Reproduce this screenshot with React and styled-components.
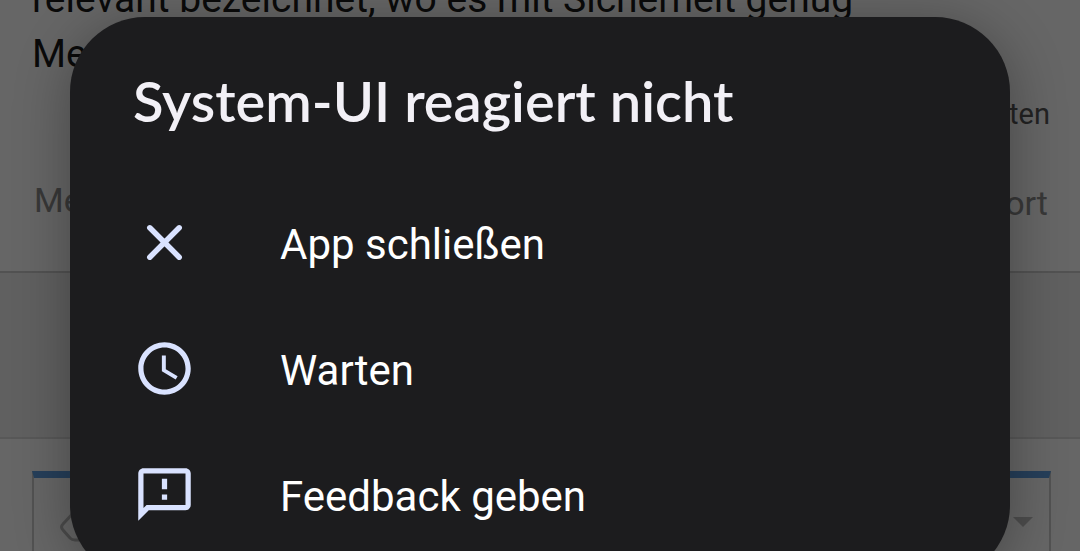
import React from "react";

import styled, { createGlobalStyle } from "styled-components";

const actions = [
  { id: "close", label: "App schließen", Icon: CloseIcon },
  { id: "wait", label: "Warten", Icon: ClockIcon },
  { id: "feedback", label: "Feedback geben", Icon: FeedbackIcon },
];

function CloseIcon() {
  return (
    <ActionIcon viewBox="0 0 24 24" aria-hidden="true">
      <path
        d="M6.4 6.4 17.6 17.6M17.6 6.4 6.4 17.6"
        fill="none"
        stroke="currentColor"
        strokeWidth="2.1"
        strokeLinecap="round"
      />
    </ActionIcon>
  );
}

function ClockIcon() {
  return (
    <ActionIcon viewBox="0 0 24 24" aria-hidden="true">
      <path d="M11.99 2C6.47 2 2 6.48 2 12s4.47 10 9.99 10C17.52 22 22 17.52 22 12S17.52 2 11.99 2zM12 20c-4.42 0-8-3.58-8-8s3.58-8 8-8 8 3.58 8 8-3.58 8-8 8zm.5-13H11v6l5.25 3.15.75-1.23-4.5-2.67z" />
    </ActionIcon>
  );
}

function FeedbackIcon() {
  return (
    <ActionIcon viewBox="0 0 24 24" aria-hidden="true">
      <path d="M20 2H4c-1.1 0-1.99.9-1.99 2L2 22l4-4h14c1.1 0 2-.9 2-2V4c0-1.1-.9-2-2-2zm0 14H5.17l-.59.59-.58.58V4h16v12zm-9-4h2v2h-2zm0-6h2v4h-2z" />
    </ActionIcon>
  );
}

const App = () => {
  return (
    <Screen>
      <GlobalStyle />

      <Page>
        <Post>
          <PostText>
            relevant bezeichnet, wo es mit Sicherheit genug
            <br />
            Medien
          </PostText>
          <PostMeta>Antworten</PostMeta>
          <PostActions>
            <PostStatus>Melden</PostStatus>
            <PostLink href="#antwort">Antwort</PostLink>
          </PostActions>
        </Post>

        <Divider />

        <Panel>
          <PanelToggle type="button" aria-label="Themen">
            <TagIcon viewBox="0 0 48 48" aria-hidden="true">
              <path d="M22 4H40a4 4 0 0 1 4 4V34a4 4 0 0 1-4 4H15q-3 0-5-2L3 28q-3-3 0-6L17 7q2-3 5-3z" />
            </TagIcon>
            <Caret viewBox="0 0 20 10" aria-hidden="true">
              <path d="M0 0H20L10 10z" />
            </Caret>
          </PanelToggle>
        </Panel>
      </Page>

      <Scrim>
        <Dialog role="dialog" aria-labelledby="dialog-title">
          <DialogTitle id="dialog-title">System-UI reagiert nicht</DialogTitle>
          {actions.map(({ id, label, Icon }) => (
            <ActionButton key={id} type="button">
              <Icon />
              <ActionLabel>{label}</ActionLabel>
            </ActionButton>
          ))}
        </Dialog>
      </Scrim>
    </Screen>
  );
};

export default App;

const GlobalStyle = createGlobalStyle`
  * {
    box-sizing: border-box;
  }

  body {
    margin: 0;
    font-family: Roboto, "Liberation Sans", sans-serif;
  }
`;

const Screen = styled.div`
  position: relative;
  height: 100vh;
  overflow: hidden;
  background-color: #ffffff;
`;

const Page = styled.main`
  display: flex;
  flex-direction: column;
`;

const Post = styled.article`
  display: flex;
  flex-direction: column;
  padding: 0 30px 43px 32px;
  margin-top: -28px;
`;

const PostText = styled.p`
  margin: 0;
  color: #1a1a1a;
  font-size: 39px;
  line-height: 55px;
`;

const PostMeta = styled.span`
  align-self: flex-end;
  margin-top: 12px;
  color: #555555;
  font-size: 29px;
  line-height: 40px;
`;

const PostActions = styled.div`
  display: flex;
  align-items: flex-start;
  justify-content: space-between;
  margin-top: 44px;
  padding: 0 2px;
  color: #8c8c8c;
  font-size: 34px;
`;

const PostStatus = styled.span`
  line-height: 44px;
`;

const PostLink = styled.a`
  color: inherit;
  line-height: 50px;
  text-decoration: none;
`;

const Divider = styled.div`
  height: 168px;
  background-color: #f0f0f0;
  border-top: 2px solid #cccccc;
  border-bottom: 2px solid #dddddd;
`;

const Panel = styled.section`
  margin: 32px 29px 0 32px;
  border: 2px solid #cccccc;
  border-top: 7px solid #5f9fe0;
`;

const PanelToggle = styled.button`
  display: flex;
  align-items: center;
  justify-content: space-between;
  width: 100%;
  padding: 24px 16px 24px 26px;
  background: none;
  border: none;
`;

const TagIcon = styled.svg`
  width: 48px;
  height: 48px;
  fill: none;
  stroke: #bbbbbb;
  stroke-width: 3;
`;

const Caret = styled.svg`
  width: 20px;
  height: 10px;
  margin-bottom: 8px;
  fill: #c0c0c0;
`;

const Scrim = styled.div`
  position: absolute;
  inset: 0;
  padding: 17px 70px 0;
  background-color: rgba(0, 0, 0, 0.6);
`;

const Dialog = styled.section`
  display: flex;
  flex-direction: column;
  padding: 48px 0 23px;
  background-color: #1c1c1e;
  border-radius: 75px;
  box-shadow: 0 8px 56px rgba(0, 0, 0, 0.32);
`;

const DialogTitle = styled.h1`
  margin: 0 63px 42px;
  color: #f2f0f6;
  font-family: Lato, Roboto, sans-serif;
  font-size: 56px;
  font-weight: 600;
  line-height: 72px;
`;

const ActionButton = styled.button`
  display: flex;
  align-items: center;
  gap: 84px;
  height: 126px;
  padding: 0 63px;
  background: none;
  border: none;
  color: #ffffff;
  font-family: inherit;
  font-size: 42px;
  text-align: left;
`;

const ActionLabel = styled.span`
  padding-top: 4px;
`;

const ActionIcon = styled.svg`
  flex: none;
  width: 63px;
  height: 63px;
  color: #d9e2ff;
  fill: currentColor;
`;
